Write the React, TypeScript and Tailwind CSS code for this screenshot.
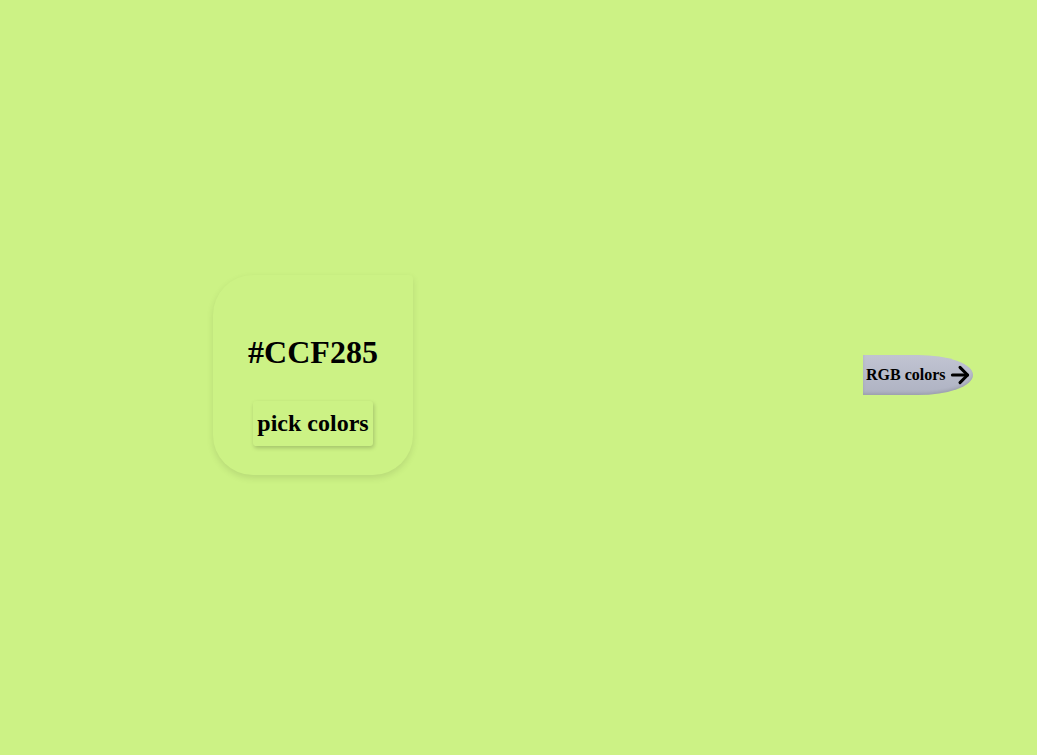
import React from 'react';
import { ArrowRight } from 'lucide-react';

export default function App() {
  const color = '#CCF285';

  return (
    <div
      className="flex h-screen items-center justify-between bg-[#ccf285] pl-[213px] pr-[64px] pb-[5px]"
      style={{ fontFamily: '"Liberation Serif", "Times New Roman", serif' }}
    >
      <div className="flex h-[200px] w-[200px] flex-col items-center justify-center rounded-[40px] rounded-tr-[4px] bg-[#ccf285] shadow-[0_3px_7px_rgba(0,0,0,0.1)]">
        <h1 className="mt-[31px] text-[32px] font-bold leading-none text-black">{color}</h1>
        <button className="mt-[33px] h-[45px] w-[120px] rounded-[3px] bg-[#ccf285] text-[24px] font-bold text-black shadow-[1px_2px_4px_rgba(0,0,0,0.2)]">
          pick colors
        </button>
      </div>

      <button className="flex h-[40px] w-[110px] items-center whitespace-nowrap bg-gradient-to-b from-[#c1c4d2] to-[#aeb2c2] pl-[3px] text-[16px] font-bold text-black rounded-r-[50%] shadow-[inset_0_-2px_3px_rgba(0,0,0,0.1)]">
        RGB colors
        <ArrowRight size={26} strokeWidth={2.8} className="ml-[1px] shrink-0" />
      </button>
    </div>
  );
}
